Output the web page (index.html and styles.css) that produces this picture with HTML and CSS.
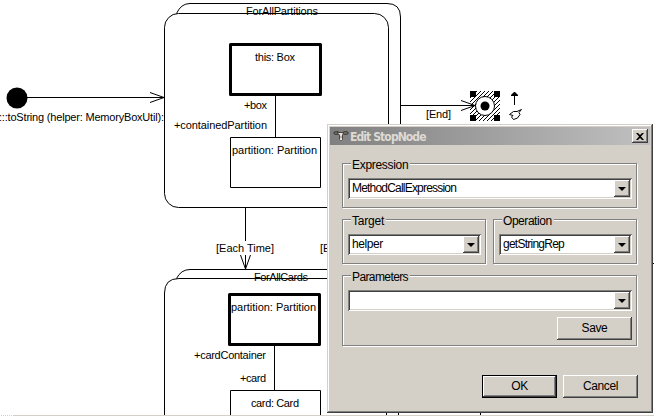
FILE: index.html
```html
<!DOCTYPE html>
<html lang="en">
<head>
<meta charset="utf-8">
<title>Edit StopNode</title>
<link rel="stylesheet" href="styles.css">
</head>
<body>
<main class="workspace">
  <svg class="diagram" width="654" height="416" viewBox="0 0 654 416">
    <defs>
      <pattern id="hatch" width="4" height="4" patternUnits="userSpaceOnUse">
        <path d="M-1 1L1 -1M-1 5L5 -1M3 5L5 3" stroke="#000" stroke-width="1"/>
      </pattern>
    </defs>
    <!-- loop activities -->
    <g class="line">
      <path d="M176.500 13.500Q181 3.500 190 3.500H387Q400.500 3.500 400.500 17V207"/>
      <rect x="164.500" y="13.500" width="224" height="194" rx="14"/>
      <path d="M176.500 278.500Q181 269.500 190 269.500H385Q398.500 269.500 398.500 283V415"/>
      <path d="M164.500 415V293Q164.500 278.500 179 278.500H372Q386.500 278.500 386.500 293V415M480.500 410V415M650 263.500H654"/>
      <!-- object nodes and links -->
      <path d="M275.500 96V137M230.500 137.500H320.500V187.500H230.500ZM274.500 346V390M230.500 415V390.500H320.500V415"/>
      <!-- transitions -->
      <path d="M27 97.500H164M401 105.500H475M245.500 208V241M245.500 255V269"/>
      <path d="M150 92.500L164 97.500L150 102.500M240.500 255L245.500 269L250.500 255"/>
    </g>
    <rect class="bold-box" x="230.500" y="44.500" width="90" height="50"/>
    <rect class="bold-box" x="229.500" y="294.500" width="90" height="50"/>
    <circle cx="17" cy="98" r="10.500"/>
    <!-- selected stop node -->
    <rect x="470" y="91" width="30" height="30" fill="url(#hatch)"/>
    <circle class="stop-ring" cx="485" cy="106" r="9.500"/>
    <circle cx="485" cy="106" r="4.500"/>
    <path d="M470 91h6v6h-6zM494 91h6v6h-6zM470 115h6v6h-6zM494 115h6v6h-6z"/>
    <path class="line" d="M461 100.500L475 105.500L461 110.500M470 105.500H475"/>
    <path class="line" d="M514.500 105V93"/>
    <path d="M514 92h1l3 3v1h-7v-1z"/>
    <path class="line hand" d="M509.500 114.500L513.500 111.500H517L521.500 109.500L519 112.500L520 114.500L517.500 118L513.500 119.500L511.500 117L513 115.500Z"/>
    <g class="labels">
      <text x="246" y="15" textLength="72">ForAllPartitions</text>
      <text x="255" y="61" textLength="40">this: Box</text>
      <text x="244" y="109" textLength="23">+box</text>
      <text x="174" y="129" textLength="93">+containedPartition</text>
      <text x="232" y="154" textLength="85">partition: Partition</text>
      <text x="-1" y="121" textLength="165">:::toString (helper: MemoryBoxUtil):</text>
      <text x="426" y="118" textLength="25">[End]</text>
      <text x="216" y="252" textLength="58">[Each Time]</text>
      <text x="320" y="252">[E</text>
      <text x="254" y="281" textLength="54">ForAllCards</text>
      <text x="231" y="311" textLength="85">partition: Partition</text>
      <text x="194" y="359" textLength="72">+cardContainer</text>
      <text x="240" y="382" textLength="26">+card</text>
      <text x="251" y="407" textLength="48">card: Card</text>
    </g>
    <path class="edge" d="M13 415.500H654"/>
    <path class="edge dotted" d="M1 415.500H13"/>
  </svg>

  <section class="dialog">
    <header class="titlebar">
      <svg class="app-icon" width="16" height="16" viewBox="0 0 16 16">
        <path d="M0 5L2 3H5L6 4H10L11 3H14L16 5L14 7H11L10 6V11L8 13L6 11V7H2Z" fill="#484440"/>
        <path d="M5 5H10L9 7V12H7V7Z" fill="#e5e3dc"/>
        <path d="M2 5h2M11 5h3M7 9h2" stroke="#8b8780"/>
      </svg>
      <h1 class="title">Edit StopNode</h1>
      <button class="close"><svg width="8" height="7" viewBox="0 0 8 7"><path d="M0 0H2L4 2L6 0H8L5 3.500L8 7H6L4 5L2 7H0L3 3.500Z"/></svg></button>
    </header>
    <div class="content">
      <section class="group">
        <h2 class="legend t-expression">Expression</h2>
        <div class="combo"><span class="t-method">MethodCallExpression</span><button class="drop"></button></div>
      </section>
      <div class="pair">
        <section class="group">
          <h2 class="legend t-target">Target</h2>
          <div class="combo"><span class="t-helper">helper</span><button class="drop"></button></div>
        </section>
        <section class="group">
          <h2 class="legend t-operation">Operation</h2>
          <div class="combo"><span class="t-rep">getStringRep</span><button class="drop"></button></div>
        </section>
      </div>
      <section class="group parameters">
        <h2 class="legend t-parameters">Parameters</h2>
        <div class="combo"><span></span><button class="drop"></button></div>
        <button class="btn save">Save</button>
      </section>
      <footer class="actions">
        <button class="btn default">OK</button>
        <button class="btn">Cancel</button>
      </footer>
    </div>
  </section>
</main>
</body>
</html>
```
FILE: styles.css
```css
* { box-sizing: border-box; }
body { margin: 0; background: #fff; overflow: hidden; font: 12px/14px "Liberation Sans", Arial, sans-serif; color: #000; }
.workspace { position: relative; width: 654px; height: 416px; overflow: hidden; }
.diagram { display: block; }
.line { fill: none; stroke: #000; stroke-width: 1; }
.bold-box { fill: none; stroke: #000; stroke-width: 3; stroke-linejoin: round; }
.stop-ring { fill: #fff; stroke: #000; }
.labels { font: 11px "Liberation Sans", Arial, sans-serif; }
.edge { stroke: #d4d0c8; }
.dotted { stroke-dasharray: 1 1; }

.dialog {
  position: absolute; left: 327px; top: 124px; width: 326px; height: 289px; padding: 3px;
  background: #d4d0c8;
  box-shadow: inset -1px -1px #404040, inset 1px 1px #d4d0c8, inset -2px -2px #808080, inset 2px 2px #fff;
}
.titlebar { display: flex; align-items: center; height: 18px; padding: 0 2px 0 3px; background: linear-gradient(90deg, #808080, #c0c0c0); }
.app-icon { flex: none; }
.title { flex: 1; margin: 1px 0 0 1px; font: bold 12px/16px "DejaVu Sans Condensed", sans-serif; letter-spacing: -.9px; color: #dedad2; white-space: nowrap; }
button { margin: 0; padding: 0; border: 0; border-radius: 0; background: #d4d0c8; color: #000; font: inherit; }
.close { display: flex; align-items: center; justify-content: center; width: 16px; height: 14px; box-shadow: inset -1px -1px #404040, inset 1px 1px #fff, inset -2px -2px #808080; }
.content { padding: 18px 12px 0; }
.group { position: relative; height: 45px; padding: 14px 6px 0; border: 1px solid #808080; box-shadow: 1px 1px #fff, inset 1px 1px #fff; width: 295px; }
.legend { position: absolute; left: 8px; top: -6px; margin: 0; padding: 1px 2px 0 1px; background: #d4d0c8; font: inherit; line-height: 13px; white-space: nowrap; }
.combo { display: flex; height: 21px; padding: 2px; margin-left: -1px; margin-right: -2px; background: #fff; box-shadow: inset 1px 1px #808080, inset -1px -1px #fff, inset 2px 2px #404040, inset -2px -2px #d4d0c8; }
.combo span { flex: 1; padding-left: 2px; line-height: 17px; white-space: nowrap; }
.drop { display: flex; align-items: center; justify-content: center; width: 16px; height: 17px; box-shadow: inset -1px -1px #404040, inset 1px 1px #fff, inset -2px -2px #808080; }
.drop::before { content: ""; border: 4px solid transparent; border-top-color: #000; border-bottom: 0; }
.pair { display: flex; gap: 7px; margin-top: 11px; }
.pair .group { width: 144px; }
.parameters { height: 71px; margin-top: 11px; display: flex; flex-direction: column; }
.btn { width: 75px; height: 23px; letter-spacing: -.4px; box-shadow: inset -1px -1px #404040, inset 1px 1px #fff, inset -2px -2px #808080; }
.save { align-self: flex-end; margin: 6px -2px 0 0; padding-bottom: 1px; }
.actions { display: flex; justify-content: flex-end; gap: 6px; margin: 29px 0 0 0; }
.actions .btn { padding-bottom: 1px; }
.default { box-shadow: inset 0 0 0 1px #000, inset -2px -2px #404040, inset 2px 2px #fff, inset -3px -3px #808080; }
.hand { fill: #fff; }
.t-expression { letter-spacing: -.3px; }
.t-target { letter-spacing: -.2px; }
.t-operation { letter-spacing: -.45px; }
.t-parameters { letter-spacing: -.6px; }
.t-method { letter-spacing: -.8px; }
.t-helper { letter-spacing: -.4px; }
.t-rep { letter-spacing: -.75px; }
```
